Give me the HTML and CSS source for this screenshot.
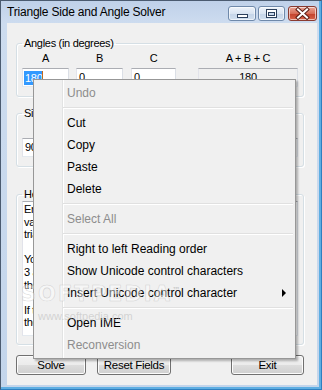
FILE: index.html
```html
<!DOCTYPE html>
<html>
	<head>
		<meta charset="utf-8">
		<title>Triangle Side and Angle Solver</title>
		<link rel="stylesheet" href="styles.css">
	</head>
	<body>
		<div class="window">
			<div class="titlebar">
				<span class="caption">Triangle Side and Angle Solver</span>
				<div class="capbuttons">
					<span class="capbtn min">
						<svg width="26" height="13" viewBox="0 0 26 13"><rect x="8.5" y="7.5" width="10" height="3" fill="#fff" stroke="#2c405c"/></svg>
					</span>
					<span class="capbtn max">
						<svg width="25" height="13" viewBox="0 0 25 13"><rect x="7.5" y="2.5" width="10" height="8" fill="#fff" stroke="#2c405c"/><rect x="9.5" y="5.5" width="6" height="3" fill="#c9d8ea" stroke="#2c405c"/></svg>
					</span>
					<span class="capbtn close">
						<svg width="27" height="13" viewBox="0 0 27 13"><path d="M9 2.5 L18 10.5 M18 2.5 L9 10.5" stroke="#5a1e16" stroke-width="4" stroke-linecap="square"/><path d="M9 2.5 L18 10.5 M18 2.5 L9 10.5" stroke="#fff" stroke-width="2" stroke-linecap="square"/></svg>
					</span>
				</div>
			</div>
			<div class="client">
				<fieldset class="group">
					<legend>Angles (in degrees)</legend>
					<div class="fields">
						<div class="col w47 gap7"><span class="lbl">A</span><span class="box"><span class="sel">180</span><span class="caret"></span></span></div>
						<div class="col w47 gap8"><span class="lbl">B</span><span class="box">0</span></div>
						<div class="col w45 gap22"><span class="lbl">C</span><span class="box">0</span></div>
						<div class="col w100"><span class="lbl">A + B + C</span><span class="box ro">180</span></div>
					</div>
				</fieldset>
				<fieldset class="group second">
					<legend>Sides</legend>
					<div class="fields">
						<div class="col w47 gap7"><span class="lbl">a</span><span class="box">90</span></div>
						<div class="col w47 gap8"><span class="lbl">b</span><span class="box">0</span></div>
						<div class="col w45 gap22"><span class="lbl">c</span><span class="box">0</span></div>
						<div class="col w100"><span class="lbl">Perimeter</span><span class="box ro">90</span></div>
					</div>
				</fieldset>
				<fieldset class="group third">
					<legend>Help</legend>
					<div class="memo">
						Enter the known values of the triangle. At least three<br>
						values are needed, one of them a side, to solve the<br>
						triangle.<br>
						<br>
						You can enter the angles in degrees; the sum of all<br>
						3 angles must be 180. Press Solve to calculate<br>
						the missing sides and angles.<br>
						<br>
						If the values do not form a valid triangle,<br>
						the fields are shown in red.
					</div>
				</fieldset>
				<div class="buttons">
					<span class="btn solve">Solve</span>
					<span class="btn reset">Reset Fields</span>
					<span class="btn exit">Exit</span>
				</div>
			</div>

			<div class="watermark">
				<span class="wm-big">SOFTPEDIA<sup>™</sup></span>
				<span class="wm-small">www.softpedia.com</span>
			</div>

			<div class="menu">
				<div class="item off">Undo</div>
				<div class="sep"></div>
				<div class="item">Cut</div>
				<div class="item">Copy</div>
				<div class="item">Paste</div>
				<div class="item">Delete</div>
				<div class="sep"></div>
				<div class="item off">Select All</div>
				<div class="sep"></div>
				<div class="item">Right to left Reading order</div>
				<div class="item">Show Unicode control characters</div>
				<div class="item sub">Insert Unicode control character<span class="arrow"></span></div>
				<div class="sep"></div>
				<div class="item">Open IME</div>
				<div class="item off">Reconversion</div>
			</div>
		</div>
	</body>
</html>
```

FILE: styles.css
```css
body {
	margin: 0;
	font-family: "Liberation Sans", Arial, sans-serif;
	font-size: 11px;
	letter-spacing: -0.3px;
	color: #000;
}

.window {
	position: relative;
	width: 322px;
	height: 390px;
	box-sizing: border-box;
	border: 1px solid #4b5b70;
	border-right-color: #2f7fc0;
	border-bottom-color: #2f7fc0;
	padding: 0 4px 4px 6px;
	background: linear-gradient(180deg, #bfd1e9 0px, #cddcef 22px, #c3d5eb 100%);
	box-shadow: inset -2px -2px 0 #5eaee2;
	display: flex;
	flex-direction: column;
}

.titlebar {
	height: 22px;
	display: flex;
	align-items: flex-start;
}
.caption {
	font-size: 12px;
	letter-spacing: -0.2px;
	line-height: 22px;
}
.capbuttons {
	margin-left: auto;
	margin-top: 5px;
	display: flex;
}
.capbtn {
	display: block;
	height: 13px;
	border: 1px solid #6f89aa;
	border-radius: 3px;
	background: linear-gradient(180deg, #eef3fa 0%, #d9e4f1 50%, #c4d4e8 51%, #d2e0ef 100%);
	box-shadow: inset 0 0 0 1px rgba(255,255,255,0.6);
}
.capbtn svg {
	display: block;
}
.min {
	width: 26px;
}
.max {
	width: 25px;
	margin-left: 2px;
}
.close {
	width: 27px;
	margin-left: 3px;
	border-color: #8a3b31;
	background: linear-gradient(180deg, #eaa596 0%, #d76e58 50%, #c2412b 51%, #d8644a 100%);
}

.client {
	flex: 1;
	background: #f0f0f0;
	padding: 14px 0 0 9px;
	display: flex;
	flex-direction: column;
}

.group {
	width: 288px;
	box-sizing: border-box;
	margin: 0;
	padding: 0 0 9px 5px;
	border: 1px solid #d5dfe5;
	border-radius: 3px;
	box-shadow: inset 1px 1px 0 #fff, 1px 1px 0 #fff;
	min-width: 0;
}
.group legend {
	padding: 0 2px;
	line-height: 13px;
}
.second {
	margin-top: 10px;
}
.third {
	margin-top: 21px;
	padding-bottom: 8px;
}

.fields {
	display: flex;
	margin-top: 2px;
}
.col {
	display: flex;
	flex-direction: column;
	align-items: center;
}
.w47 { width: 47px; }
.w45 { width: 45px; }
.w100 { width: 100px; }
.gap7 { margin-right: 7px; }
.gap8 { margin-right: 8px; }
.gap22 { margin-right: 22px; }

.lbl {
	line-height: 13px;
}
.box {
	margin-top: 3px;
	width: 100%;
	height: 19px;
	box-sizing: border-box;
	border: 1px solid;
	border-color: #abadb3 #dbdfe6 #e3e9ef #e2e3ea;
	background: #fff;
	padding: 0 2px;
	line-height: 17px;
	display: flex;
	align-items: center;
	white-space: nowrap;
}
.box.ro {
	background: #f0f0f0;
	justify-content: center;
}
.sel {
	background: #3399ff;
	color: #fff;
	margin-left: -1px;
	padding-left: 1px;
	line-height: 14px;
}
.caret {
	width: 1px;
	height: 14px;
	background: #c66a1c;
}

.memo {
	height: 135px;
	width: 276px;
	box-sizing: border-box;
	border: 1px solid;
	border-color: #abadb3 #dbdfe6 #e3e9ef #e2e3ea;
	background: #fff;
	padding: 1px 1px;
	line-height: 12.6px;
	overflow: hidden;
	white-space: nowrap;
}

.buttons {
	display: flex;
	width: 288px;
	margin-top: 10px;
}
.btn {
	height: 20px;
	box-sizing: border-box;
	border: 1px solid #707070;
	border-radius: 3px;
	background: linear-gradient(180deg, #f2f2f2 0%, #ebebeb 50%, #dddddd 51%, #cfcfcf 100%);
	box-shadow: inset 0 0 0 1px #fcfcfc;
	text-align: center;
	line-height: 18px;
	font-size: 11.5px;
}
.solve { width: 70px; }
.reset { width: 74px; margin-left: 11px; }
.exit { width: 73px; margin-left: auto; }

.watermark {
	position: absolute;
	left: 20px;
	top: 281px;
	pointer-events: none;
	z-index: 2;
}
.wm-big {
	display: block;
	font-family: "DejaVu Sans", sans-serif;
	font-weight: bold;
	font-size: 21px;
	letter-spacing: 2px;
	color: rgba(255,255,255,0.45);
	-webkit-text-stroke: 0.6px rgba(170,170,170,0.45);
}
.wm-big sup {
	font-size: 8px;
	-webkit-text-stroke: 0;
	color: rgba(160,160,160,0.5);
}
.wm-small {
	display: block;
	margin: 4px 0 0 17px;
	font-size: 11px;
	letter-spacing: 0;
	color: rgba(190,190,190,0.6);
}

.menu {
	position: absolute;
	left: 32px;
	top: 78px;
	width: 263px;
	box-sizing: border-box;
	border: 1px solid #979797;
	padding: 2px;
	background: linear-gradient(90deg, #f0f0f0 28px, #e2e3e3 28px, #e2e3e3 29px, #ffffff 29px, #ffffff 30px, #f0f0f0 30px);
	background-color: #f0f0f0;
	box-shadow: 2px 2px 2px rgba(0,0,0,0.28);
	font-size: 12px;
	letter-spacing: 0;
	z-index: 1;
}
.item {
	height: 22px;
	line-height: 22px;
	padding-left: 31px;
	position: relative;
	white-space: nowrap;
}
.item.off {
	color: #8d8d8d;
}
.sep {
	height: 8px;
	margin-left: 27px;
	box-sizing: border-box;
	padding-top: 3px;
}
.sep::before {
	content: "";
	display: block;
	height: 1px;
	background: #e0e0e0;
	border-bottom: 1px solid #ffffff;
}
.arrow {
	position: absolute;
	right: 7px;
	top: 7px;
	width: 0;
	height: 0;
	border-top: 4px solid transparent;
	border-bottom: 4px solid transparent;
	border-left: 4px solid #000;
}
```
